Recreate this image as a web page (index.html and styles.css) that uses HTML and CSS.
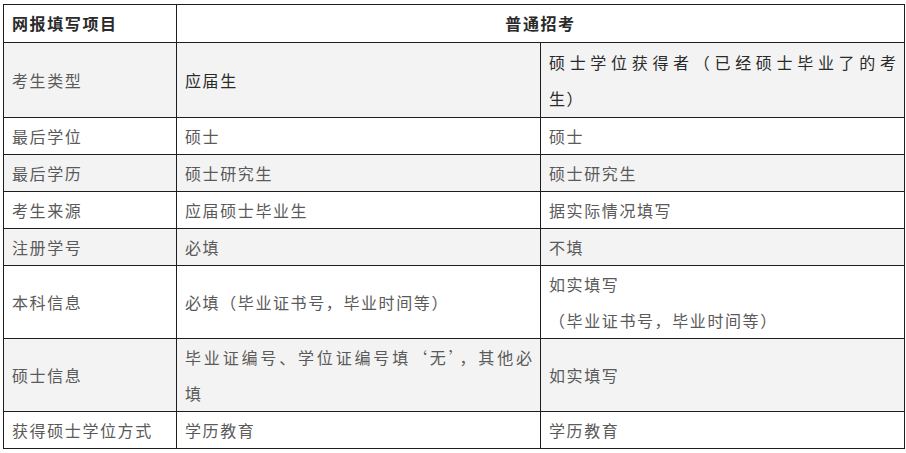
FILE: index.html
```html
<!DOCTYPE html>
<html lang="zh-CN">
<head>
<meta charset="utf-8">
<title>网报填写项目</title>
<link rel="stylesheet" href="styles.css">
</head>
<body>
<table class="info-table">
  <colgroup>
    <col class="c1">
    <col class="c2">
    <col class="c3">
  </colgroup>
  <tr class="head">
    <th class="hl">网报填写项目</th>
    <th class="hc" colspan="2">普通招考</th>
  </tr>
  <tr class="tall">
    <td>考生类型</td>
    <td class="strong">应届生</td>
    <td class="strong"><span class="jline">硕士学位获得者（已经硕士毕业了的考</span>生）</td>
  </tr>
  <tr>
    <td>最后学位</td>
    <td>硕士</td>
    <td>硕士</td>
  </tr>
  <tr>
    <td>最后学历</td>
    <td>硕士研究生</td>
    <td>硕士研究生</td>
  </tr>
  <tr>
    <td>考生来源</td>
    <td>应届硕士毕业生</td>
    <td>据实际情况填写</td>
  </tr>
  <tr>
    <td>注册学号</td>
    <td>必填</td>
    <td>不填</td>
  </tr>
  <tr>
    <td>本科信息</td>
    <td>必填（毕业证书号，毕业时间等）</td>
    <td><p class="para">如实填写</p><p class="para">（毕业证书号，毕业时间等）</p></td>
  </tr>
  <tr>
    <td>硕士信息</td>
    <td><span class="jline">毕业证编号、学位证编号填‘无’，其他必</span>填</td>
    <td>如实填写</td>
  </tr>
  <tr>
    <td>获得硕士学位方式</td>
    <td>学历教育</td>
    <td>学历教育</td>
  </tr>
</table>
</body>
</html>
```

FILE: styles.css
```css
html, body {
  margin: 0;
  padding: 0;
  background: #ffffff;
}

body {
  padding: 4px 0 0 3px;
  font-family: "Noto Sans CJK SC", "Noto Sans", sans-serif;
  font-size: 16px;
  color: #5a5a5a;
}

.info-table {
  border-collapse: collapse;
  table-layout: fixed;
  width: 901px;
}

.c1 { width: 173px; }
.c2 { width: 364px; }
.c3 { width: 364px; }

.info-table th,
.info-table td {
  border: 1px solid #1e1e1e;
  padding: 0 8px 0 8px;
  line-height: 36px;
  vertical-align: middle;
  text-align: left;
  letter-spacing: 1.6px;
  font-weight: 400;
}

.info-table tr:nth-child(even) {
  background: #f3f3f3;
}

.head th {
  font-weight: 700;
  color: #2a2a2a;
  line-height: 37px;
}

.head .hc {
  text-align: center;
}

.tall td {
  padding-top: 1px;
  padding-bottom: 1px;
}

.strong {
  font-weight: 700;
  color: #2a2a2a;
}

.jline {
  display: block;
  text-align: justify;
  text-align-last: justify;
  letter-spacing: 0;
}

.para {
  margin: 0;
}
```
